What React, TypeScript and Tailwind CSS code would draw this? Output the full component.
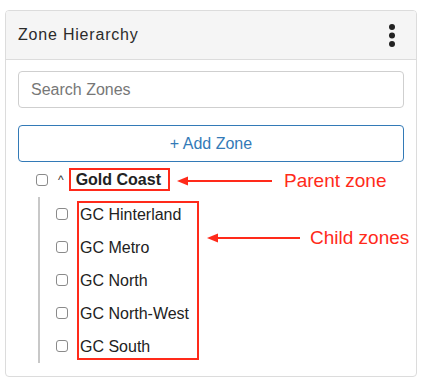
const children = ["GC Hinterland", "GC Metro", "GC North", "GC North-West", "GC South"];

const Box = () => (
  <span className="block h-[12px] w-[12px] shrink-0 rounded-[3px] border border-[#8a8a8a] bg-white"></span>
);

const Arrow = ({ width }: { width: number }) => (
  <svg width={width} height="12" viewBox={`0 0 ${width} 12`}>
    <line x1="8" y1="6" x2={width} y2="6" stroke="#ff2a1a" strokeWidth="2" />
    <polygon points="0,6 11,1.5 11,10.5" fill="#ff2a1a" />
  </svg>
);

export default function App() {
  return (
    <div className="relative h-[382px] w-[425px] bg-white font-['Liberation_Sans',Arial,sans-serif] text-[#333]">
      <div className="absolute left-[5px] top-[10px] h-[367px] w-[412px] overflow-hidden rounded-[4px] border border-[#dcdcdc] bg-white">
        {/* header */}
        <div className="flex h-[49px] items-center justify-between border-b border-[#dcdcdc] bg-[#f5f5f5] pl-[12px] pr-[20px]">
          <span className="text-[16px] tracking-[0.8px] text-[#2b2b2b]">Zone Hierarchy</span>
          <svg width="8" height="24" viewBox="0 0 8 24">
            <circle cx="4" cy="4" r="3" fill="#222" />
            <circle cx="4" cy="12.5" r="3" fill="#222" />
            <circle cx="4" cy="21" r="3" fill="#222" />
          </svg>
        </div>

        {/* body */}
        <div className="px-[12px] pt-[11px]">
          <div className="flex h-[37px] items-center rounded-[4px] border border-[#cfcfcf] pl-[12px] pt-[1px] text-[16px] text-[#777]">
            Search Zones
          </div>
          <div className="mt-[17px] flex h-[37px] items-center justify-center rounded-[4px] border border-[#337ab7] pt-[1px] text-[16px] text-[#337ab7]">
            + Add Zone
          </div>

          {/* tree */}
          <div className="mt-[6px] pl-[18px]">
            <div className="flex h-[23px] items-center">
              <Box />
              <span className="ml-[10px] mr-[5px] text-[12px] leading-none text-[#333]">^</span>
              <span className="flex h-[23px] items-center border-2 border-[#ff2a1a] pl-[5px] pr-[7px] pt-[1px] text-[16px] font-bold text-[#222]">
                Gold Coast
              </span>
            </div>
            <div className="ml-[2px] mt-[6px] flex h-[166px] border-l-2 border-[#c8c8c8] pl-[16px] pt-[4px]">
              <div className="flex flex-col gap-[11px] pt-[2px]">
                {children.map((c) => (
                  <div key={c} className="flex h-[22px] items-center">
                    <Box />
                  </div>
                ))}
              </div>
              <div className="ml-[9px] flex h-[159px] w-[122px] flex-col gap-[11px] border-2 border-[#ff2a1a] pl-[1px] pt-[1px]">
                {children.map((c) => (
                  <div key={c} className="flex h-[22px] items-center text-[16px] text-[#222]">
                    {c}
                  </div>
                ))}
              </div>
            </div>
          </div>
        </div>
      </div>

      {/* annotations */}
      <div className="absolute left-[177px] top-[170px] flex items-center">
        <Arrow width={95} />
        <span className="ml-[12px] text-[19px] leading-[22px] text-[#ff2a1a]">Parent zone</span>
      </div>
      <div className="absolute left-[207px] top-[227px] flex items-center">
        <Arrow width={93} />
        <span className="ml-[10px] text-[19px] leading-[22px] text-[#ff2a1a]">Child zones</span>
      </div>
    </div>
  );
}
